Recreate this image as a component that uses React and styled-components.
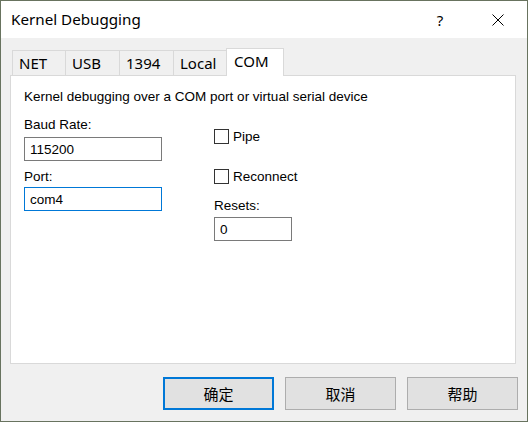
import React from 'react';
import styled, { createGlobalStyle } from 'styled-components';

const Global = createGlobalStyle`
  html, body { margin: 0; padding: 0; background: #f0f0f0; }
  body { font-family: "Liberation Sans", Arial, sans-serif; color: #000; }
  * { box-sizing: border-box; }
`;

const Window = styled.div`
  width: 528px;
  height: 422px;
  border: 1px solid #68735f;
  background: #f0f0f0;
  display: flex;
  flex-direction: column;
`;

const TitleBar = styled.div`
  height: 37px;
  flex: none;
  background: #fff;
  display: flex;
  align-items: center;
  padding-left: 10px;
`;

const Title = styled.div`
  flex: 1;
  font-family: "Noto Sans", sans-serif;
  font-size: 15.2px;
  line-height: 20px;
  margin-top: -2px;
`;

const CaptionButton = styled.div`
  width: 58px;
  height: 100%;
  display: flex;
  align-items: center;
  justify-content: center;
  font-family: "Noto Sans", sans-serif;
  font-size: 15px;
  line-height: 20px;
`;

const Body = styled.div`
  flex: 1;
  display: flex;
  flex-direction: column;
  padding: 10px 9px 0 9px;
`;

const TabBar = styled.div`
  height: 27px;
  flex: none;
  display: flex;
  align-items: flex-end;
  padding-left: 2px;
  position: relative;
  z-index: 1;
`;

const Tab = styled.div`
  width: ${(p) => p.$w}px;
  height: ${(p) => (p.$active ? 28 : 25)}px;
  margin-left: ${(p) => (p.$first ? 0 : p.$active ? -3 : -1)}px;
  margin-right: ${(p) => (p.$active ? -2 : 0)}px;
  margin-bottom: ${(p) => (p.$active ? -1 : 0)}px;
  border: 1px solid #d9d9d9;
  border-bottom: none;
  background: ${(p) => (p.$active ? '#fff' : '#f0f0f0')};
  padding: 2px 0 0 ${(p) => (p.$active ? 7 : 6)}px;
  font-family: "Noto Sans", sans-serif;
  font-size: 15px;
  line-height: 20px;
  white-space: nowrap;
  position: relative;
  z-index: ${(p) => (p.$active ? 2 : 0)};
`;

const Panel = styled.div`
  height: 289px;
  flex: none;
  margin-right: 2px;
  border: 1px solid #d9d9d9;
  background: #fff;
  padding: 13px 13px;
  font-size: 13.5px;
  line-height: 16px;
`;

const Description = styled.div`
  height: 16px;
  white-space: nowrap;
`;

const Columns = styled.div`
  display: flex;
  margin-top: 12px;
`;

const Column = styled.div`
  display: flex;
  flex-direction: column;
  align-items: flex-start;
  width: ${(p) => p.$w}px;
  margin-left: ${(p) => p.$gap || 0}px;
`;

const Label = styled.div`
  height: 16px;
  margin-top: ${(p) => p.$mt || 0}px;
  white-space: nowrap;
`;

const TextBox = styled.input`
  display: block;
  width: ${(p) => p.$w}px;
  height: 24px;
  margin: ${(p) => p.$mt || 0}px 0 0 0;
  border: 1px solid ${(p) => (p.$focused ? '#0078d7' : '#7a7a7a')};
  background: #fff;
  padding: 0 5px;
  font-family: "Liberation Sans", Arial, sans-serif;
  font-size: 13.5px;
  line-height: 22px;
  color: #000;
  outline: none;
`;

const CheckRow = styled.label`
  display: flex;
  align-items: center;
  height: 15px;
  margin-top: ${(p) => p.$mt || 0}px;
  white-space: nowrap;
`;

const CheckBox = styled.span`
  width: 15px;
  height: 15px;
  flex: none;
  border: 1px solid #333;
  background: #fff;
  margin-right: 4px;
`;

const ButtonRow = styled.div`
  display: flex;
  justify-content: flex-end;
  gap: 11px;
  margin-top: 13px;
`;

const Button = styled.button`
  width: 111px;
  height: 33px;
  padding: 0;
  background: #e1e1e1;
  border: ${(p) => (p.$primary ? '2px solid #0078d7' : '1px solid #adadad')};
  font-family: "Noto Sans CJK SC", "Noto Sans", sans-serif;
  font-size: 15px;
  line-height: 20px;
  color: #000;
`;

const tabs = [
  { label: 'NET', w: 54 },
  { label: 'USB', w: 55 },
  { label: '1394', w: 55 },
  { label: 'Local', w: 56 },
  { label: 'COM', w: 58, active: true },
];

export default function App() {
  return (
    <>
      <Global />
      <Window>
        <TitleBar>
          <Title>Kernel Debugging</Title>
          <CaptionButton>?</CaptionButton>
          <CaptionButton>
            <svg width="12" height="12" viewBox="0 0 12 12">
              <path d="M0.5 0.5 L11.5 11.5 M11.5 0.5 L0.5 11.5" stroke="#000" strokeWidth="1" fill="none" />
            </svg>
          </CaptionButton>
        </TitleBar>
        <Body>
          <TabBar>
            {tabs.map((t, i) => (
              <Tab key={t.label} $w={t.w} $active={t.active} $first={i === 0}>
                {t.label}
              </Tab>
            ))}
          </TabBar>
          <Panel>
            <Description>Kernel debugging over a COM port or virtual serial device</Description>
            <Columns>
              <Column $w={138}>
                <Label>Baud Rate:</Label>
                <TextBox $w={138} $mt={4} readOnly defaultValue="115200" />
                <Label $mt={8}>Port:</Label>
                <TextBox $w={138} $mt={2} $focused readOnly defaultValue="com4" />
              </Column>
              <Column $w={120} $gap={52}>
                <CheckRow $mt={12}>
                  <CheckBox />
                  Pipe
                </CheckRow>
                <CheckRow $mt={25}>
                  <CheckBox />
                  Reconnect
                </CheckRow>
                <Label $mt={14}>Resets:</Label>
                <TextBox $w={78} $mt={3} readOnly defaultValue="0" />
              </Column>
            </Columns>
          </Panel>
          <ButtonRow>
            <Button $primary>确定</Button>
            <Button>取消</Button>
            <Button>帮助</Button>
          </ButtonRow>
        </Body>
      </Window>
    </>
  );
}
